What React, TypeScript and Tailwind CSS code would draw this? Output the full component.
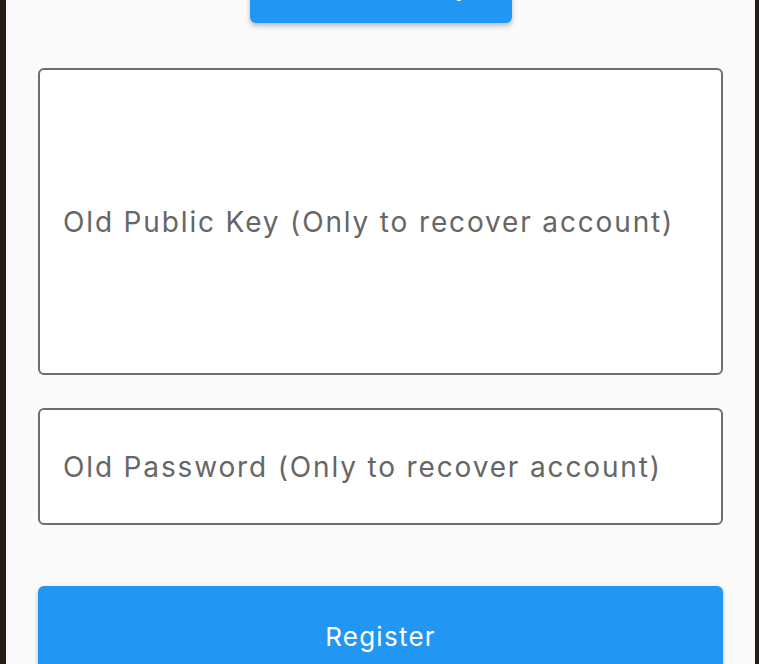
import React from 'react'

const font = { fontFamily: 'Inter, Roboto, "Noto Sans", sans-serif' }

const OutlinedField = ({ label, tall }: { label: string; tall?: boolean }) => (
  <div
    className={`flex items-center rounded-[6px] border-2 border-[#6e6e6e] bg-white px-[23px] ${
      tall ? 'h-[307px]' : 'h-[117px]'
    }`}
  >
    <span className="text-[28px] tracking-[1.85px] text-[#666666]">{label}</span>
  </div>
)

export default function App() {
  return (
    <div className="flex h-[664px] w-[759px] overflow-hidden bg-[#231d1a]" style={font}>
      <div className="ml-[6px] mr-[4px] flex flex-1 flex-col bg-[#fafafa] px-[32px]">
        {/* bouton du haut, en partie hors de l'écran */}
        <div className="-mt-[25px] flex justify-center">
          <button className="flex h-[48px] w-[262px] items-center justify-center rounded-[6px] bg-[#2196f3] pb-[26px] text-[26px] tracking-[1.25px] text-white shadow-[0_3px_5px_rgba(0,0,0,0.25)]">
            Generate Key
          </button>
        </div>

        <div className="mt-[45px]">
          <OutlinedField label="Old Public Key (Only to recover account)" tall />
        </div>

        <div className="mt-[33px]">
          <OutlinedField label="Old Password (Only to recover account)" />
        </div>

        <div className="mt-[61px]">
          <button className="flex h-[100px] w-full items-center justify-center rounded-[6px] bg-[#2196f3] text-[26px] tracking-[1.25px] text-white shadow-[0_2px_4px_rgba(0,0,0,0.25)]">
            Register
          </button>
        </div>
      </div>
    </div>
  )
}
